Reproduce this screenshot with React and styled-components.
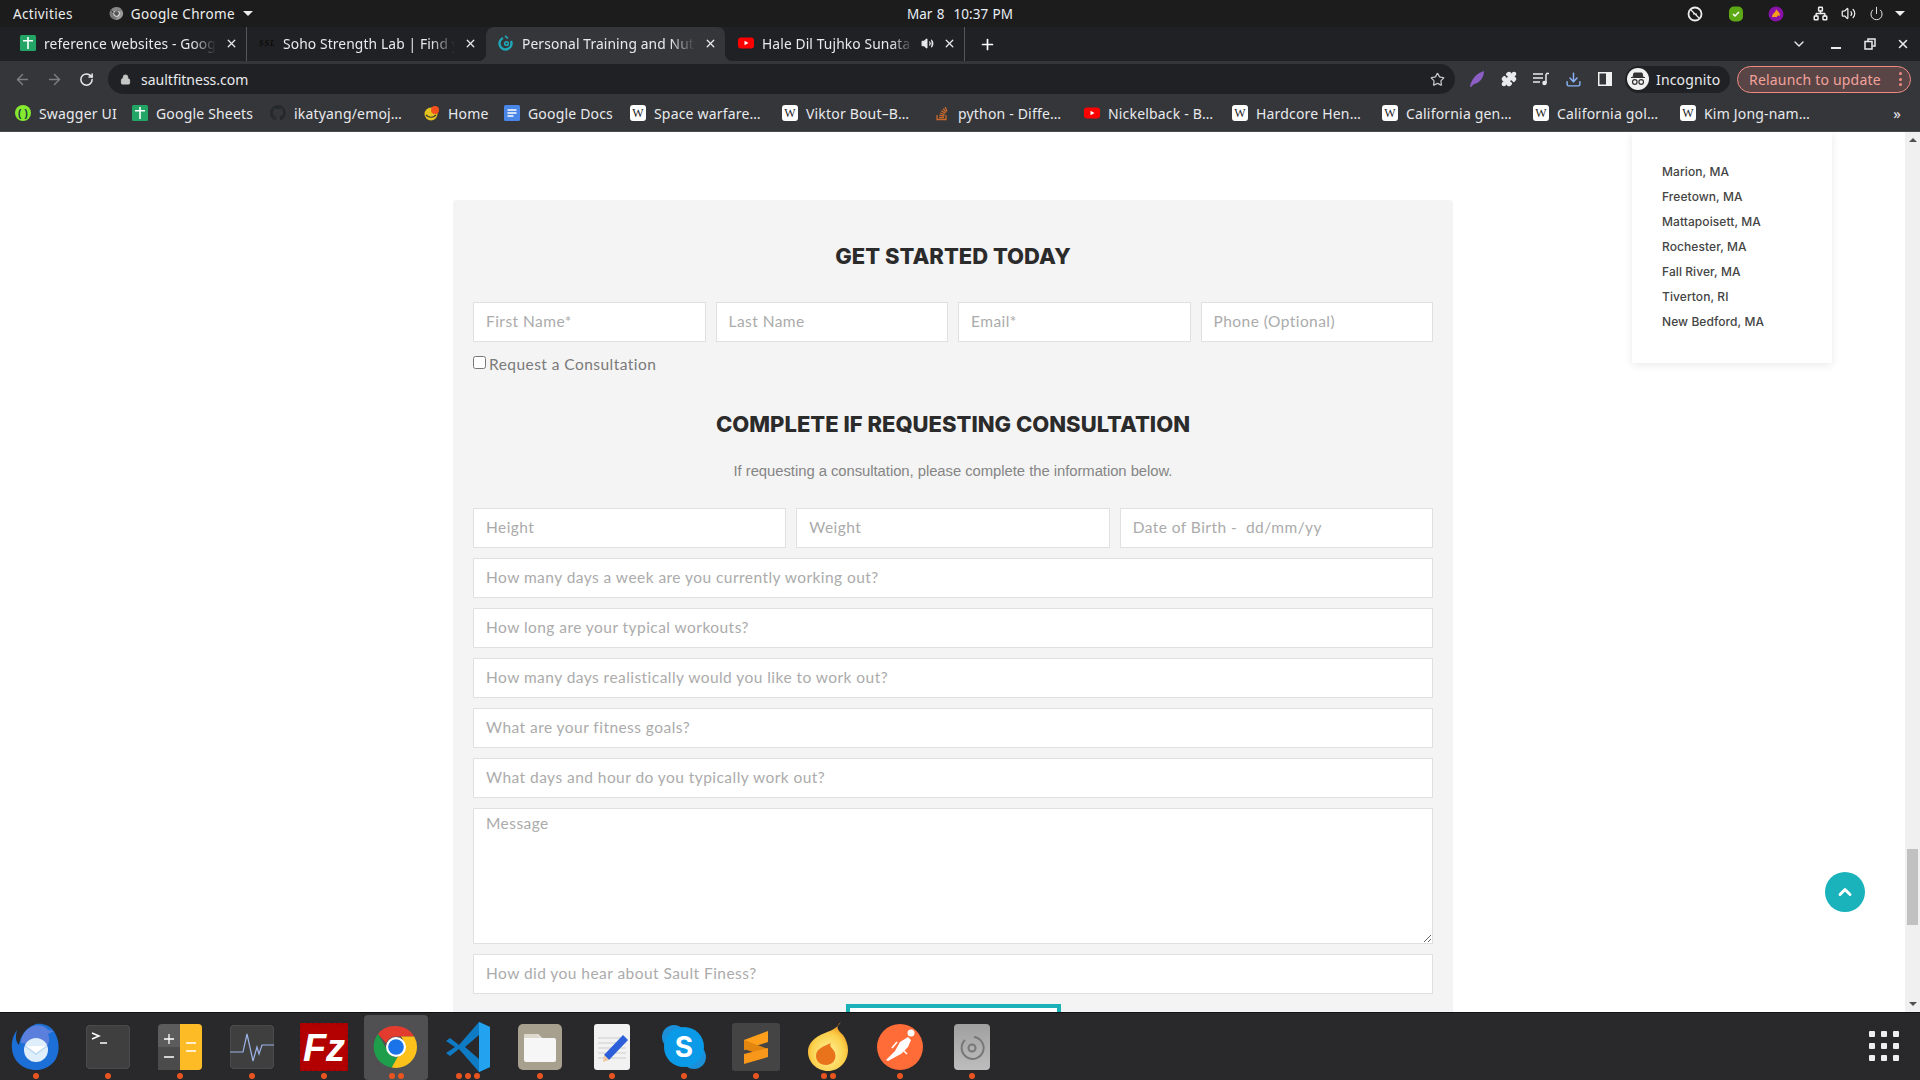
import React from "react";
import styled, { createGlobalStyle } from "styled-components";
import { ArrowLeft, ArrowRight, RotateCw, Star, Puzzle, Download, Lock, X, Plus, ChevronDown, ChevronUp, Volume2, Power, Network } from "lucide-react";

const Global = createGlobalStyle`
  html, body { margin: 0; padding: 0; background: #fff; overflow: hidden; }
  * { box-sizing: border-box; }
`;
const UI = `"Noto Sans", "Open Sans", sans-serif`;
const Shell = styled.div`width:1920px;height:1080px;display:flex;flex-direction:column;overflow:hidden;font-family:${UI};`;

/* GNOME top bar */
const TopBar = styled.div`height:27px;flex:none;background:#1c1c1c;color:#eee;display:grid;grid-template-columns:1fr auto 1fr;align-items:center;font-size:13.5px;padding:0 9px 0 13px;`;
const TopLeft = styled.div`display:flex;align-items:center;letter-spacing:.35px;`;
const AppMenu = styled.div`display:flex;align-items:center;gap:7px;margin-left:36px;`;
const Caret = styled.span`width:0;height:0;border-left:5px solid transparent;border-right:5px solid transparent;border-top:5px solid #eee;margin-left:${p => p.$ml || 0}px;`;
const Clock = styled.div`font-size:13.5px;color:#e8eef5;word-spacing:1px;margin-left:-4px;`;
const Tray = styled.div`display:flex;align-items:center;justify-content:flex-end;`;
const TraySlot = styled.span`width:${p => p.$w}px;margin-left:${p => p.$ml || 0}px;display:flex;justify-content:center;align-items:center;color:#eee;`;

/* Tabs */
const TabStrip = styled.div`height:34px;flex:none;background:#202124;display:flex;align-items:stretch;padding-left:8px;position:relative;`;
const Tab = styled.div`
  width:${p => p.$w || 239}px;display:flex;align-items:center;padding:0 8px 2px 12px;gap:8px;color:#e8eaed;font-size:13.8px;position:relative;
  background:${p => (p.$active ? "#35363a" : "transparent")};
  border-radius:${p => (p.$active ? "8px 8px 0 0" : "0")};
  border-right:${p => (p.$sep ? "1px solid #55565a" : "1px solid transparent")};
  background-clip:padding-box;
  ${p => p.$active && `
    &::before,&::after{content:"";position:absolute;bottom:0;width:8px;height:8px;}
    &::before{left:-8px;background:radial-gradient(circle at 0 0,transparent 8px,#35363a 8.5px);}
    &::after{right:-8px;background:radial-gradient(circle at 100% 0,transparent 8px,#35363a 8.5px);}
  `}
`;
const TabTitle = styled.span`flex:1;min-width:0;white-space:nowrap;overflow:hidden;letter-spacing:.12px;-webkit-mask-image:linear-gradient(90deg,#000 86%,transparent 100%);mask-image:linear-gradient(90deg,#000 86%,transparent 100%);`;
const TabClose = styled.span`width:14px;height:14px;display:flex;align-items:center;justify-content:center;color:#e8eaed;flex:none;`;
const NewTab = styled.span`width:44px;display:flex;align-items:center;justify-content:center;color:#fff;`;
const WindowControls = styled.div`margin-left:auto;display:flex;align-items:center;`;
const WinSlot = styled.span`width:${p => p.$w}px;display:flex;justify-content:center;align-items:center;color:#e8eaed;`;

/* Toolbar */
const Toolbar = styled.div`height:36px;flex:none;background:#35363a;display:flex;align-items:center;padding:0 9px 0 6px;`;
const ToolSlot = styled.span`width:32px;height:30px;flex:none;display:flex;align-items:center;justify-content:center;color:${p => p.$c || "#e8eaed"};`;
const Omnibox = styled.div`flex:none;width:1347px;height:30px;margin:0 6px;border-radius:15px;background:#202124;display:flex;align-items:center;padding:0 2px 0 12px;color:#e8eaed;font-size:14px;`;
const Url = styled.span`margin-left:10px;flex:1;`;
const IncognitoPill = styled.div`width:105px;height:27px;margin-left:4px;border-radius:14px;background:#202124;display:flex;align-items:center;padding-left:2px;gap:7px;color:#e8eaed;font-size:14px;letter-spacing:.15px;`;
const Avatar = styled.span`width:22px;height:22px;border-radius:50%;background:#f1f1f1;display:flex;align-items:center;justify-content:center;flex:none;`;
const RelaunchPill = styled.div`width:174px;height:27px;margin-left:7px;border-radius:14px;border:1px solid #f28b82;background:#5a4546;color:#f2a29b;display:flex;align-items:center;justify-content:space-between;padding:0 8px 0 11px;font-size:14px;letter-spacing:.2px;`;
const Kebab = styled.span`display:flex;flex-direction:column;gap:2.5px;& i{width:3px;height:3px;border-radius:50%;background:#f28b82;display:block;}`;

/* Bookmarks */
const Bookmarks = styled.div`height:35px;flex:none;background:#35363a;display:flex;align-items:center;padding:0 8px 2px 15px;border-bottom:1px solid #4a4b4f;color:#e8eaed;font-size:14px;letter-spacing:.18px;`;
const Bookmark = styled.div`display:flex;align-items:center;gap:8px;margin-right:16px;flex:none;`;
const BookmarkLabel = styled.span`width:${p => p.$w}px;white-space:nowrap;`;
const Chevrons = styled.span`margin-left:auto;font-size:15px;padding-right:11px;`;

/* Page */
const Page = styled.div`flex:1;min-height:0;display:flex;position:relative;background:#fff;overflow:hidden;`;
const Content = styled.main`flex:1;min-width:0;position:relative;overflow:hidden;`;
const Panel = styled.section`margin:68px 452px 0 453px;background:#f4f4f4;border-radius:3px;padding:41px 20px 40px;`;
const Heading = styled.h2`
  margin:${p => p.$mt || 0}px 0 0;font:800 22px/30px "Inter","Open Sans",sans-serif;color:#2b2b2b;text-align:center;
`;
const Row = styled.div`display:grid;grid-template-columns:repeat(${p => p.$cols},1fr);gap:10px;margin-top:${p => p.$mt || 0}px;`;
const Stack = styled.div`display:flex;flex-direction:column;gap:10px;margin-top:10px;`;
const fieldCss = `
  width:100%;background:#fff;border:1.5px solid #e0e0e0;outline:none;border-radius:0;
  font:400 15.5px "Lato","Open Sans",sans-serif;letter-spacing:.45px;color:#555;display:block;
  &::placeholder{color:#ababab;opacity:1;}
`;
const Field = styled.input`${fieldCss} height:40px;padding:0 11px 2px 12px;`;
const TextArea = styled.textarea`${fieldCss} height:136px;padding:5px 11px 0 12px;resize:vertical;`;
const CheckRow = styled.label`display:flex;align-items:center;height:20px;margin-top:12px;color:#7a7a7a;font:400 15.5px "Lato",sans-serif;letter-spacing:.45px;`;
const Check = styled.input`width:13px;height:13px;margin:0 3px 0 0;position:relative;top:-2px;`;
const Lead = styled.p`margin:20px 0 0;text-align:center;font:400 14.85px/24px "Liberation Sans",sans-serif;color:#858585;letter-spacing:-.05px;`;
const Submit = styled.button`display:block;margin:10px auto 0;width:215px;height:50px;background:#fff;border:4px solid #1ab2b8;padding:0;`;
const AreaCard = styled.aside`position:absolute;top:0;right:73px;width:200px;height:231px;background:#fff;box-shadow:0 2px 8px rgba(0,0,0,.09);padding:27px 30px;display:flex;flex-direction:column;`;
const AreaItem = styled.div`font:500 12px/25px "Inter","Noto Sans",sans-serif;letter-spacing:.08px;color:#444;white-space:nowrap;`;
const ToTop = styled.button`position:absolute;right:40px;top:740px;width:40px;height:40px;border-radius:50%;border:0;padding:0;background:#1ab3bb;color:#fff;display:flex;align-items:center;justify-content:center;`;
const Scrollbar = styled.div`width:15px;flex:none;background:#f0f0f0;display:flex;flex-direction:column;align-items:center;`;
const ScrollArrow = styled.span`width:0;height:0;border-left:4px solid transparent;border-right:4px solid transparent;${p => p.$down ? "border-top:4px solid #505050;margin-top:auto;margin-bottom:6px;" : "border-bottom:4px solid #505050;margin-top:6px;"}`;
const Thumb = styled.span`width:11px;height:76px;background:#c1c1c1;margin-top:707px;`;

/* Dock */
const Dock = styled.footer`height:68px;flex:none;background:#29292b;border-top:1px solid #111;display:flex;align-items:center;position:relative;`;
const DockItem = styled.div`width:72px;height:66px;flex:none;display:flex;align-items:flex-start;justify-content:center;position:relative;padding-top:9px;`;
const ActiveBack = styled.span`position:absolute;left:4px;right:4px;top:1px;bottom:0;background:#505052;border-radius:4px;`;
const DockIconWrap = styled.span`position:relative;width:52px;height:48px;display:flex;align-items:center;justify-content:center;`;
const Dots = styled.span`position:absolute;bottom:1px;left:0;right:0;display:flex;justify-content:center;gap:3px;`;
const Dot = styled.i`width:6px;height:6px;border-radius:50%;background:#e95420;display:block;`;
const AppGrid = styled.div`position:absolute;right:21px;top:18px;display:grid;grid-template-columns:repeat(3,6px);gap:6px;& i{width:6px;height:6px;border-radius:1px;background:#eee;display:block;}`;

/* Small drawings */
const Sheets = () => (<svg width="16" height="16" viewBox="0 0 16 16"><rect width="16" height="16" rx="1.5" fill="#23a566"/><path d="M7.2 2h1.600v12H7.200zM3 5h10v1.500H3z" fill="#fff"/></svg>);
const Wiki = () => (<svg width="16" height="16" viewBox="0 0 16 16"><rect width="16" height="16" rx="3" fill="#fff"/><text x="8" y="12" textAnchor="middle" fontFamily="Liberation Serif" fontSize="12" fill="#222">W</text></svg>);
const Yt = () => (<svg width="16" height="16" viewBox="0 0 16 16"><rect x="0" y="2.5" width="16" height="11" rx="3" fill="#f00"/><path d="M6.5 5.8L10.5 8l-4 2.2z" fill="#fff"/></svg>);
const Ssl = () => (<svg width="16" height="16" viewBox="0 0 16 16"><text x="0" y="11" fontFamily="Liberation Serif" fontStyle="italic" fontWeight="700" fontSize="8" fill="#0a0a0a" textLength="16">SSL</text></svg>);
const Swirl = () => (<svg width="16" height="16" viewBox="0 0 16 16" fill="none" stroke="#1ea8b8" strokeWidth="2.4"><path d="M5 3A6 6 0 1 0 13 6"/><circle cx="8.500" cy="8.500" r="1.800" strokeWidth="1.600"/><path d="M7 .8l3 2.500" strokeWidth="1.600"/></svg>);
const Swagger = () => (<svg width="16" height="16" viewBox="0 0 16 16"><circle cx="8" cy="8" r="8" fill="#85ea2d"/><text x="8" y="11.5" textAnchor="middle" fontSize="10" fontWeight="700" fontFamily="Liberation Mono" fill="#173647">()</text></svg>);
const Github = () => (<svg width="16" height="16" viewBox="0 0 16 16"><path fill="#24292e" d="M8 0a8 8 0 0 0-2.5 15.6c.4.1.5-.2.5-.4v-1.4c-2.200.5-2.700-1-2.700-1-.4-.9-.9-1.200-.9-1.200-.7-.5.1-.5.1-.5.8.1 1.200.8 1.200.8.700 1.200 1.900.9 2.300.7.100-.5.300-.9.500-1.100-1.800-.2-3.600-.9-3.600-4 0-.9.300-1.600.8-2.100-.1-.2-.4-1 .1-2.100 0 0 .7-.2 2.200.8a7.600 7.600 0 0 1 4 0c1.500-1 2.200-.8 2.200-.8.400 1.100.2 1.900.1 2.100.5.6.8 1.300.8 2.100 0 3.100-1.900 3.700-3.700 3.900.3.300.6.800.6 1.500v2.200c0 .2.100.5.600.4A8 8 0 0 0 8 0z"/></svg>);
const HomeIco = () => (<svg width="16" height="16" viewBox="0 0 16 16"><circle cx="7" cy="9" r="6.500" fill="#e4c21f"/><path d="M2 10c3 3 7 3 10 0" stroke="#333" strokeWidth="1.200" fill="none"/><circle cx="11" cy="5" r="4" fill="#f4511e"/></svg>);
const Docs = () => (<svg width="16" height="16" viewBox="0 0 16 16"><rect x="0" width="16" height="16" rx="1.500" fill="#4a86e8"/><path d="M3.500 5h9M3.500 8h9M3.500 11h6" stroke="#fff" strokeWidth="1.400"/></svg>);
const StackO = () => (<svg width="16" height="16" viewBox="0 0 16 16" fill="none" stroke="#c9692c" strokeWidth="1.300"><path d="M3 10v4.500h9V10"/><path d="M5 12.700h5M5.200 10.400l5 .6M5.900 8l4.800 1.600M7.200 5.700l4.300 2.600M9 3.700l3.400 3.500M11 2l2 4"/></svg>);
const ChromeLogo = ({ s = 14, mono }) => (
  <svg width={s} height={s} viewBox="0 0 48 48">
    <path d="M24 3a21 21 0 0 1 18.200 10.500H24a10.500 10.500 0 0 0-9.800 6.700L6 11A21 21 0 0 1 24 3z" fill={mono ? "#888" : "#e33b2e"}/>
    <path d="M6 11l9 15.500a10.500 10.500 0 0 0 11 7.800L19.700 44.500A21 21 0 0 1 6 11z" fill={mono ? "#777" : "#1e9e4a"}/>
    <path d="M42.200 13.500A21 21 0 0 1 19.700 44.500L29 28a10.500 10.500 0 0 0 0-14.500z" fill={mono ? "#999" : "#fcc11b"}/>
    <circle cx="24" cy="24" r="10" fill="#fff"/><circle cx="24" cy="24" r="7.800" fill={mono ? "#555" : "#1a73e8"}/>
  </svg>
);

const Thunderbird = () => (<svg width="50" height="48" viewBox="0 0 50 48"><path d="M25 1c6-1 13 1 17 6 4 5 7 14 5 23-2 10-11 17-22 17C12 47 2 38 1 26-0 18 3 11 6 7c-2 8-1 12 2 15 1-8 6-17 17-21z" fill="#1c6fd6"/><path d="M22 3c6-2 12 0 15 4l6 1-6 3c2 4 1 8 0 11l-27-2C10 12 15 6 22 3z" fill="#5a7fdc"/><circle cx="25" cy="27" r="12" fill="#dfeefb"/><path d="M14 23l11 8 11-8" fill="#fff" stroke="#bcd8f2" strokeWidth="1.500"/></svg>);
const Terminal = () => (<svg width="44" height="44" viewBox="0 0 44 44"><rect width="44" height="44" rx="5" fill="#3f3f3f" stroke="#555"/><path d="M6 8l7 3-7 3" stroke="#fff" strokeWidth="1.500" fill="none"/><path d="M14 18h7" stroke="#fff" strokeWidth="1.500"/></svg>);
const Calc = () => (<svg width="44" height="46" viewBox="0 0 44 46"><rect width="44" height="46" rx="4" fill="#5c5c5c"/><path d="M22 0h18a4 4 0 0 1 4 4v38a4 4 0 0 1-4 4H22z" fill="#fdbb26"/><rect y="23" width="22" height="23" fill="#4b4b4b"/><path d="M6 15h10M11 10v10M6 33h10M28 19h10M28 27h10" stroke="#fff" strokeWidth="1.300"/></svg>);
const Monitor = () => (<svg width="44" height="44" viewBox="0 0 44 44"><rect width="44" height="44" rx="5" fill="#3f3f3f" stroke="#555"/><path d="M0 27h13l4-18 6 27 4-14 2 7 3-9h12" stroke="#9db4e8" strokeWidth="1.200" fill="none"/></svg>);
const FileZilla = () => (<svg width="48" height="48" viewBox="0 0 48 48"><rect width="48" height="48" fill="#b30000" stroke="#a00000" strokeWidth="3" strokeDasharray="3 3"/><text x="24" y="38" textAnchor="middle" fontFamily="Liberation Sans" fontWeight="700" fontStyle="italic" fontSize="38" fill="#fff">Fz</text></svg>);
const VSCode = () => (<svg width="44" height="52" viewBox="0 0 44 52"><path d="M33 1L13 24 4 17l-4 3 9 6-9 6 4 3 9-7 20 23 11-5V6z" fill="#0f7bc4"/><path d="M33 1l11 5v40l-11 5z" fill="#22a2ef"/><path d="M33 14L19 26l14 12z" fill="#29292b"/></svg>);
const Files = () => (<svg width="44" height="46" viewBox="0 0 44 46"><rect width="44" height="46" rx="5" fill="#a8a08e"/><path d="M6 12a2 2 0 0 1 2-2h12l4 4h12a2 2 0 0 1 2 2v20a2 2 0 0 1-2 2H8a2 2 0 0 1-2-2z" fill="#f6f6f6"/><path d="M6 12a2 2 0 0 1 2-2h11l4 4H6z" fill="#ddd8cc"/></svg>);
const TextEd = () => (<svg width="36" height="46" viewBox="0 0 36 46"><rect width="36" height="46" rx="3" fill="#f2f2f2"/><path d="M4 14h28M4 19h28M4 24h28M4 29h28M4 34h28" stroke="#ccc"/><path d="M29 11l5 5-19 20-5-5z" fill="#2c5fd9"/><path d="M10 31l5 5-6 2z" fill="#f0c9a0"/></svg>);
const Skype = () => (<svg width="44" height="44" viewBox="0 0 44 44"><circle cx="12" cy="12" r="12" fill="#1b8fd8"/><circle cx="32" cy="32" r="12" fill="#1b8fd8"/><circle cx="22" cy="22" r="20" fill="#0a9ae8"/><text x="22" y="32" textAnchor="middle" fontFamily="Inter" fontWeight="700" fontSize="28" fill="#fff">S</text></svg>);
const Sublime = () => (<svg width="48" height="48" viewBox="0 0 48 48"><rect width="48" height="48" rx="3" fill="#444"/><path d="M12 17L36 8v11L12 27z" fill="#ff9f1c"/><path d="M12 17l24 9v8L12 26z" fill="#e2860f"/><path d="M36 25v9L12 41V31z" fill="#f8971a"/></svg>);
const Firestorm = () => (<svg width="40" height="50" viewBox="0 0 40 50"><defs><radialGradient id="fs" cx=".5" cy=".65" r=".6"><stop offset="0" stopColor="#fff3a0"/><stop offset=".7" stopColor="#fbd04a"/><stop offset="1" stopColor="#f09a22"/></radialGradient></defs><path d="M33 0c-7 5-2 9 2 13 3 4 5 10 5 15 0 12-9 21-20 21S0 40 0 30C0 17 14 12 22 9c5-2 8-5 11-9z" fill="url(#fs)"/><path d="M23 21c-3 3 3 6 4 10 2 7-3 12-9 12-6 0-10-4-10-9 0-8 9-10 15-13z" fill="#e8731a"/></svg>);
const Postman = () => (<svg width="46" height="46" viewBox="0 0 46 46"><circle cx="23" cy="23" r="23" fill="#ff6c37"/><path d="M9 36l9-9 5-9 8-5 3 3-3 7-7 7-2 1-11 6z" fill="#fff"/><path d="M20 18l-5 6M26 26l4 4" stroke="#fff" strokeWidth="1.500"/><circle cx="34" cy="9" r="3.500" fill="#fff"/></svg>);
const Disc = () => (<svg width="36" height="46" viewBox="0 0 36 46"><defs><linearGradient id="d" x1="0" y1="0" x2="0" y2="1"><stop offset="0" stopColor="#a0a0a0"/><stop offset="1" stopColor="#bdbdbd"/></linearGradient></defs><rect width="36" height="46" rx="4" fill="url(#d)"/><path d="M20 13a11 11 0 1 1-9 3" stroke="#777" strokeWidth="2" fill="none"/><circle cx="18" cy="24" r="3.500" stroke="#777" strokeWidth="2" fill="none"/></svg>);

const tabs = [
  { title: "reference websites - Goog", icon: <Sheets />, sep: true },
  { title: "Soho Strength Lab | Find y", icon: <Ssl /> },
  { title: "Personal Training and Nut", icon: <Swirl />, active: true, w: 240 },
  { title: "Hale Dil Tujhko Sunata", icon: <Yt />, audio: true, sep: true },
];
const marks = [
  [<Swagger />, "Swagger UI", 77], [<Sheets />, "Google Sheets", 98], [<Github />, "ikatyang/emoj…", 114], [<HomeIco />, "Home", 40],
  [<Docs />, "Google Docs", 86], [<Wiki />, "Space warfare…", 112], [<Wiki />, "Viktor Bout–B…", 112], [<StackO />, "python - Diffe…", 110],
  [<Yt />, "Nickelback - B…", 108], [<Wiki />, "Hardcore Hen…", 110], [<Wiki />, "California gen…", 111], [<Wiki />, "California gol…", 107], [<Wiki />, "Kim Jong-nam…", 113],
];
const dock = [[<Thunderbird />, 1], [<Terminal />, 1], [<Calc />, 1], [<Monitor />, 1], [<FileZilla />, 1], [<ChromeLogo s={48} />, 2, true], [<VSCode />, 3], [<Files />, 1], [<TextEd />, 1], [<Skype />, 1], [<Sublime />, 1], [<Firestorm />, 2], [<Postman />, 1], [<Disc />, 1]];
const areas = ["Marion, MA", "Freetown, MA", "Mattapoisett, MA", "Rochester, MA", "Fall River, MA", "Tiverton, RI", "New Bedford, MA"];
const questions = ["How many days a week are you currently working out?", "How long are your typical workouts?", "How many days realistically would you like to work out?", "What are your fitness goals?", "What days and hour do you typically work out?"];

export default function App() {
  return (
    <Shell>
      <Global />
      <TopBar>
        <TopLeft>
          <span>Activities</span>
          <AppMenu><ChromeLogo s={15} mono /><span>Google Chrome</span><Caret $ml={1} /></AppMenu>
        </TopLeft>
        <Clock>Mar 8&nbsp;&nbsp;10:37 PM</Clock>
        <Tray>
          <TraySlot $w={40}><svg width="16" height="16" viewBox="0 0 16 16" fill="none" stroke="#eee" strokeWidth="1.800"><circle cx="8" cy="8" r="6.500"/><path d="M4 4l8 8M6 8h4" strokeWidth="1.200"/></svg></TraySlot>
          <TraySlot $w={41}><svg width="16" height="16" viewBox="0 0 16 16"><rect x="1" y="0.500" width="14" height="15" rx="5" fill="#5da815"/><path d="M5 8l2 2 4-4" stroke="#fff" strokeWidth="1.500" fill="none"/></svg></TraySlot>
          <TraySlot $w={40}><svg width="16" height="16" viewBox="0 0 16 16"><circle cx="8" cy="8" r="7.500" fill="#8a12a8"/><path d="M4 11c0-4 4-4 4-8 1 2 4 3 4 7-2-1-3 0-3 1z" fill="#f9a01b"/></svg></TraySlot>
          <TraySlot $w={28} $ml={10}><Network size={15} strokeWidth={2.400} /></TraySlot>
          <TraySlot $w={29}><Volume2 size={15} /></TraySlot>
          <TraySlot $w={26}><Power size={15} strokeWidth={1.500} /></TraySlot>
          <TraySlot $w={22}><Caret /></TraySlot>
        </Tray>
      </TopBar>

      <TabStrip>
        {tabs.map(t => (
          <Tab key={t.title} $active={t.active} $sep={t.sep} $w={t.w}>
            {t.icon}
            <TabTitle>{t.title}</TabTitle>
            {t.audio && <Volume2 size={13} color="#e8eaed" fill="#e8eaed" />}
            <TabClose><X size={13} strokeWidth={2.400} /></TabClose>
          </Tab>
        ))}
        <NewTab><Plus size={17} strokeWidth={2.400} /></NewTab>
        <WindowControls>
          <WinSlot $w={36}><ChevronDown size={16} /></WinSlot>
          <WinSlot $w={37}><svg width="12" height="12" viewBox="0 0 12 12"><path d="M1 10h10" stroke="#e8eaed" strokeWidth="2"/></svg></WinSlot>
          <WinSlot $w={32}><svg width="12" height="12" viewBox="0 0 12 12" fill="none" stroke="#e8eaed" strokeWidth="1.500"><rect x="1" y="3.500" width="7" height="7.500"/><path d="M4 3V1h7v7H8.500"/></svg></WinSlot>
          <WinSlot $w={34}><X size={14} strokeWidth={2.600} /></WinSlot>
        </WindowControls>
      </TabStrip>

      <Toolbar>
        <ToolSlot $c="#7d7e82"><ArrowLeft size={17} /></ToolSlot>
        <ToolSlot $c="#7d7e82"><ArrowRight size={17} /></ToolSlot>
        <ToolSlot><RotateCw size={15} strokeWidth={2.400} /></ToolSlot>
        <Omnibox>
          <Lock size={11} fill="#c4c7c5" color="#c4c7c5" />
          <Url>saultfitness.com</Url>
          <ToolSlot $c="#c4c7c5"><Star size={15} /></ToolSlot>
        </Omnibox>
        <ToolSlot><svg width="16" height="18" viewBox="0 0 16 18"><path d="M1 17C2 9 8 3 15 1c0 6-4 12-10 13l-3 3z" fill="#8c5fc4"/></svg></ToolSlot>
        <ToolSlot><Puzzle size={16} fill="#e8eaed" /></ToolSlot>
        <ToolSlot><svg width="16" height="14" viewBox="0 0 16 14" fill="none" stroke="#e8eaed" strokeWidth="1.500"><path d="M0 2h10M0 6h10M0 10h7M13 2v9"/><circle cx="11.500" cy="11" r="1.500" fill="#e8eaed"/><path d="M13 1.500h3"/></svg></ToolSlot>
        <ToolSlot $c="#8ab4f8"><Download size={17} /></ToolSlot>
        <ToolSlot><svg width="14" height="14" viewBox="0 0 14 14"><rect width="14" height="14" fill="#f1f1f1"/><rect x="1.500" y="1.500" width="6.500" height="11" fill="#35363a"/></svg></ToolSlot>
        <IncognitoPill>
          <Avatar><svg width="16" height="14" viewBox="0 0 16 14"><path d="M4 1h8l1 4H3zM1 5.500h14" stroke="#333" fill="#333"/><circle cx="4.800" cy="10" r="2.300" fill="none" stroke="#333" strokeWidth="1.200"/><circle cx="11.200" cy="10" r="2.300" fill="none" stroke="#333" strokeWidth="1.200"/></svg></Avatar>
          <span>Incognito</span>
        </IncognitoPill>
        <RelaunchPill>
          <span>Relaunch to update</span>
          <Kebab><i /><i /><i /></Kebab>
        </RelaunchPill>
      </Toolbar>

      <Bookmarks>
        {marks.map(([icon, label, w], i) => (
          <Bookmark key={i}>{icon}<BookmarkLabel $w={w}>{label}</BookmarkLabel></Bookmark>
        ))}
        <Chevrons>»</Chevrons>
      </Bookmarks>

      <Page>
        <Content>
          <Panel>
            <Heading>GET STARTED TODAY</Heading>
            <Row $cols={4} $mt={31}>
              <Field placeholder="First Name*" />
              <Field placeholder="Last Name" />
              <Field placeholder="Email*" />
              <Field placeholder="Phone (Optional)" />
            </Row>
            <CheckRow><Check type="checkbox" />Request a Consultation</CheckRow>
            <Heading $mt={35}>COMPLETE IF REQUESTING CONSULTATION</Heading>
            <Lead>If requesting a consultation, please complete the information below.</Lead>
            <Row $cols={3} $mt={25}>
              <Field placeholder="Height" />
              <Field placeholder="Weight" />
              <Field placeholder="Date of Birth -  dd/mm/yy" />
            </Row>
            <Stack>
              {questions.map(q => <Field key={q} placeholder={q} />)}
              <TextArea placeholder="Message" />
              <Field placeholder="How did you hear about Sault Finess?" />
            </Stack>
            <Submit aria-label="Submit" />
          </Panel>
          <AreaCard>{areas.map(a => <AreaItem key={a}>{a}</AreaItem>)}</AreaCard>
          <ToTop><ChevronUp size={20} strokeWidth={3.500} /></ToTop>
        </Content>
        <Scrollbar>
          <ScrollArrow />
          <Thumb />
          <ScrollArrow $down />
        </Scrollbar>
      </Page>

      <Dock>
        {dock.map(([icon, n, active], i) => (
          <DockItem key={i}>
            {active && <ActiveBack />}
            <DockIconWrap>{icon}</DockIconWrap>
            <Dots>{Array.from({ length: n }).map((_, k) => <Dot key={k} />)}</Dots>
          </DockItem>
        ))}
        <AppGrid>{Array.from({ length: 9 }).map((_, k) => <i key={k} />)}</AppGrid>
      </Dock>
    </Shell>
  );
}
